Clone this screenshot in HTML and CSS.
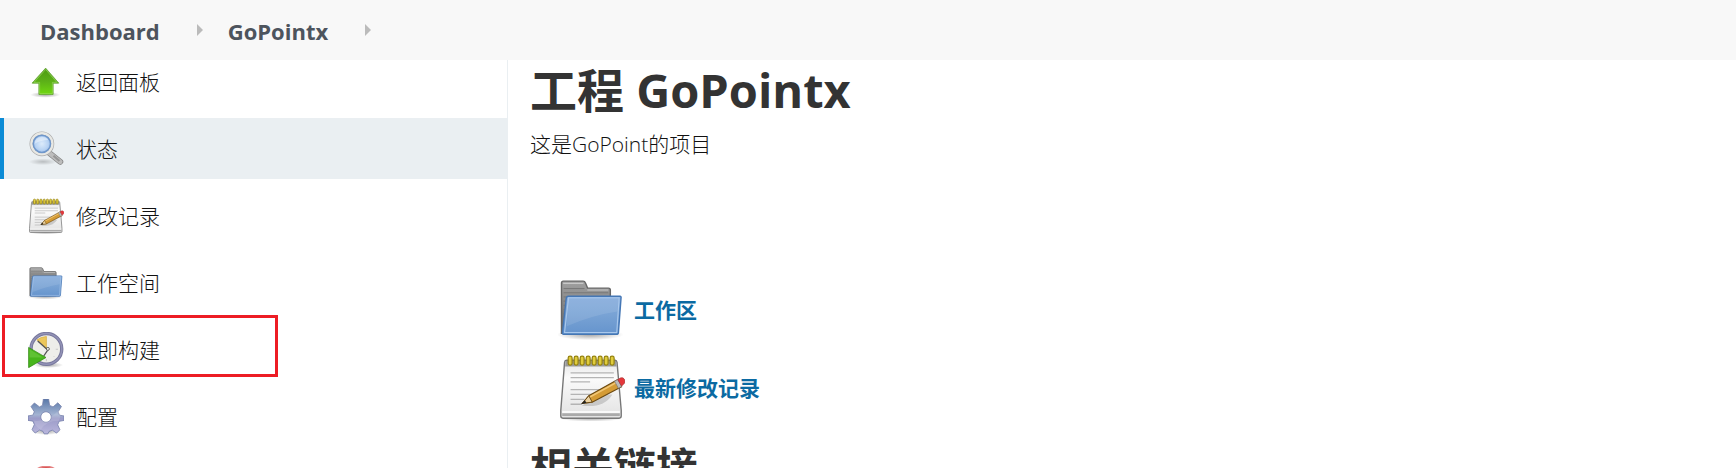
FILE: index.html
```html
<!DOCTYPE html>
<html lang="zh-CN">
<head>
<meta charset="utf-8">
<meta name="viewport" content="width=device-width, initial-scale=1">
<title>GoPointx</title>
<link rel="stylesheet" href="styles.css">
</head>
<body>
<svg class="defs" aria-hidden="true">
  <defs>
    <linearGradient id="green" x1="0" y1="0" x2="0" y2="1"><stop offset="0" stop-color="#4b9a10"/><stop offset=".5" stop-color="#5cb018"/><stop offset="1" stop-color="#70d810"/></linearGradient>
    <linearGradient id="grey" x1="0" y1="0" x2="0" y2="1"><stop offset="0" stop-color="#a0a0a0"/><stop offset="1" stop-color="#666"/></linearGradient>
    <linearGradient id="blue" x1="0" y1="0" x2="0" y2="1"><stop offset="0" stop-color="#84abdc"/><stop offset=".5" stop-color="#78a2d4"/><stop offset="1" stop-color="#6594cd"/></linearGradient>
    <linearGradient id="paper" x1="0" y1="0" x2="0" y2="1"><stop offset="0" stop-color="#e4e4e4"/><stop offset=".3" stop-color="#fbfbfb"/><stop offset="1" stop-color="#e2e2e2"/></linearGradient>
    <linearGradient id="steel" x1="0" y1="0" x2="0" y2="1"><stop offset="0" stop-color="#5878a8"/><stop offset=".45" stop-color="#a3b3d2"/><stop offset=".55" stop-color="#9b9bc8"/><stop offset="1" stop-color="#b9b6dc"/></linearGradient>
    <radialGradient id="glass"><stop offset="0" stop-color="#dcebfb"/><stop offset=".6" stop-color="#b8d3f3"/><stop offset="1" stop-color="#8db3e2"/></radialGradient>
    <radialGradient id="shade"><stop offset="0" stop-color="#000" stop-opacity=".35"/><stop offset="1" stop-color="#000" stop-opacity="0"/></radialGradient>
    <symbol id="folder" viewBox="0 0 48 48">
      <ellipse cx="23" cy="42" rx="24" ry="4" fill="url(#shade)"/>
      <path d="M2.500 41V5q0-1.300 1.300-1.300H18q1.200 0 1.600 1.200l1.600 3.800h15q1.300 0 1.300 1.300v31z" fill="url(#grey)" stroke="#666"/>
      <path d="M3.700 5.300h14.500M21 10h15" stroke="#c8c8c8" stroke-width=".8"/>
      <path d="M4 9h15M4 12h32M4 15h4M4 18h4M4 21h4M4 24h4M4 27h3M4 30h3" stroke="#777" stroke-width=".7"/>
      <path d="M7.500 14.500h37q.8 0 .7.900l-1.900 25q-.1 1.400-1.500 1.400H4q-1 0-.8-1.200L5.900 16q.2-1.500 1.600-1.500z" fill="url(#blue)" stroke="#4577b5"/>
      <path d="M7.500 15.700h36.300l-1.700 24.800H4.700z" fill="none" stroke="#a9c8ec" stroke-width=".8"/>
      <path d="M7.300 16.500h36l-.7 9Q25 28 6.300 36z" fill="#fff" opacity=".1"/>
    </symbol>
    <symbol id="notes" viewBox="0 0 48 48">
      <ellipse cx="23.500" cy="46" rx="23" ry="2.500" fill="url(#shade)"/>
      <path d="M6 4.500h35q1 0 1.300 1.500l3 34.500v4q0 1.500-1.500 1.500H3.500Q2 46 2 44.500v-4L4.700 6Q4.900 4.500 6 4.500z" fill="url(#paper)" stroke="#777"/>
      <path d="M5.400 5h36.300l.3 4H5.100z" fill="#999"/>
      <path d="M3 41.500h41.300" stroke="#fff"/><path d="M3 43.500h41.300" stroke="#aaa" stroke-width="2"/>
      <path d="M9 13.500h31M9 17h31M9 20h14M9 25.500h28M9 29h24M9 32.500h10M9 36h8" stroke="#b4b4b4" stroke-width=".9"/>
      <g fill="#e0cc3c" stroke="#96830f" stroke-width=".9"><rect x="7.300" y="1.500" width="2.800" height="6.500" rx="1.300"/><rect x="11.600" y="1.500" width="2.800" height="6.500" rx="1.300"/><rect x="15.900" y="1.500" width="2.800" height="6.500" rx="1.300"/><rect x="20.200" y="1.500" width="2.800" height="6.500" rx="1.300"/><rect x="24.500" y="1.500" width="2.800" height="6.500" rx="1.300"/><rect x="28.800" y="1.500" width="2.800" height="6.500" rx="1.300"/><rect x="33.100" y="1.500" width="2.800" height="6.500" rx="1.300"/><rect x="37.400" y="1.500" width="2.800" height="6.500" rx="1.300"/></g>
      <path d="M17 37q16 2 22-8l-8 0z" fill="#000" opacity=".15"/>
      <path d="M17.500 35.300l4.600-5.400L42.500 18.500l3 5L24.500 34.500z" fill="#d49b35" stroke="#6c4a12" stroke-width=".8"/>
      <path d="M22.500 31L43 19.800" stroke="#f1c674" stroke-width="1.200"/>
      <path d="M17.500 35.300l4.600-5.400 2.400 4.600z" fill="#ecd2a0" stroke="#6c4a12" stroke-width=".7"/><path d="M16.500 36l2.700-2.900 1.200 1.800z" fill="#222"/>
      <path d="M40.500 19.500l2.300-1.200 2.800 5-2.300 1.300z" fill="#bbb" stroke="#777" stroke-width=".5"/>
      <path d="M42.800 18.300l2.200-1.200q1.700-.5 2.500.9t.1 2.900l-2 2.100z" fill="#e5373b" stroke="#a33" stroke-width=".5"/>
    </symbol>
  </defs>
</svg>

<header class="topbar">
  <nav class="crumbs" aria-label="Breadcrumb">
    <a href="#">Dashboard</a><span class="caret"></span>
    <a href="#">GoPointx</a><span class="caret"></span>
  </nav>
</header>

<div class="page">
  <nav class="side">
    <a class="task" href="#">
      <svg class="icon" viewBox="0 0 48 48"><ellipse cx="23" cy="41" rx="20" ry="4" fill="url(#shade)"/><path d="M23.500 5.500L41 25.500h-7.500V40.500H14.500v-15H5.500z" fill="url(#green)" stroke="#5a9c28"/><path d="M23.500 7.300L38.500 24.500h-6v15H15.500v-15H8z" fill="none" stroke="#a8e070" opacity=".7"/></svg>
      返回面板</a>
    <a class="task active" href="#">
      <svg class="icon" viewBox="0 0 48 48"><ellipse cx="20" cy="41" rx="19" ry="4.500" fill="url(#shade)" opacity=".6"/><path d="M28 29L43 41" stroke="#858585" stroke-width="8" stroke-linecap="round"/><path d="M28 29L43 41" stroke="#bdbdbd" stroke-width="6" stroke-linecap="round"/><path d="M34 33l8 7" stroke="#969696" stroke-width="3"/><circle cx="18.500" cy="17" r="14" fill="url(#glass)" stroke="#aaa" stroke-width="5"/><circle cx="18.500" cy="17" r="14" fill="none" stroke="#e8e8e4" stroke-width="3.200"/><circle cx="18.500" cy="17" r="11.500" fill="none" stroke="#6f97cb" stroke-width="2"/><path d="M9 17q0-9 10-9 6 0 8 4-10 0-18 5z" fill="#fff" opacity=".4"/></svg>
      状态</a>
    <a class="task" href="#"><svg class="icon"><use href="#notes"/></svg>修改记录</a>
    <a class="task" href="#"><svg class="icon"><use href="#folder"/></svg>工作空间</a>
    <a class="task marked" href="#">
      <svg class="icon" viewBox="0 0 48 48"><ellipse cx="27" cy="44" rx="20" ry="4" fill="url(#shade)"/><circle cx="24.500" cy="22.500" r="20.500" fill="#eeeeea" stroke="#77779c" stroke-width="4.500"/><circle cx="24.500" cy="22.500" r="20.500" fill="none" stroke="#9292b6" stroke-width="2"/><path d="M24.500 22L12 10.500q5-4 12.500-4.500z" fill="#ecc75c" stroke="#d8ad3e"/><path d="M13 12l11 10 3 1-6 9" fill="none" stroke="#555" stroke-width="1.800"/><circle cx="26.500" cy="22.500" r="2" fill="#eee" stroke="#444"/><path d="M37 23h3M24.500 36v3M34 32l1 1" stroke="#bbb"/><path d="M.8 20.500L24 34 .8 47.500z" fill="#47b51b" stroke="#348b15"/><path d="M2 23l18 11H2z" fill="#86d558" opacity=".4"/></svg>
      立即构建</a>
    <a class="task" href="#">
      <svg class="icon" viewBox="0 0 48 48"><ellipse cx="24" cy="43" rx="20" ry="5" fill="url(#shade)"/><path fill-rule="evenodd" d="M20.500 0h7l1.300 8.500 4.600 2L39.700 5l4.900 5-4.500 7.200 1.900 4.400 6 1v6l-6.500 1.200-1.900 4.600 3 6.600-4.500 4.500-5.700-4-4.400 1.800L26.500 46.500h-5L20 43.200l-4.400-1.800-6 4-4.200-4.500 3-6.900-1.900-4.500L0 28.500v-6l6.500-1L8.400 17 4 10l4.500-4.700 6.800 5.200 4-2zM24 17a7 7 0 1 0 0 14 7 7 0 1 0 0-14z" fill="url(#steel)" stroke="#717ca8"/><path d="M8 29Q27 31 42 14q3 8-1 15-17 0-24 12-7-3-9-12z" fill="#fff" opacity=".13"/></svg>
      配置</a>
    <a class="task" href="#">
      <svg class="icon" viewBox="0 0 48 48"><circle cx="24" cy="22.500" r="22" fill="#d34848" stroke="#e58080" stroke-width="2"/><path d="M12 20h24v6H12z" fill="#fff"/></svg>
    </a>
  </nav>

  <main class="content">
    <h1>工程 GoPointx</h1>
    <p class="description">这是GoPoint的项目</p>
    <div class="links">
      <a href="#"><svg class="big-icon"><use href="#folder"/></svg>工作区</a>
      <a href="#"><svg class="big-icon"><use href="#notes"/></svg>最新修改记录</a>
    </div>
    <h2>相关链接</h2>
  </main>
</div>
</body>
</html>
```
FILE: styles.css
```css
*, *::before, *::after { box-sizing: border-box; }

body {
  margin: 0;
  height: 100vh;
  display: flex;
  flex-direction: column;
  overflow: hidden;
  background: #fff;
  color: #333;
  font: 21px/30px "Open Sans", "Noto Sans CJK SC", sans-serif;
}

a { color: inherit; text-decoration: none; }

.defs { position: absolute; width: 0; height: 0; }

.topbar {
  position: relative;
  z-index: 1;
  flex: none;
  height: 60px;
  padding: 2px 40px 0;
  background: #f8f8f8;
}

.crumbs {
  display: flex;
  align-items: center;
  height: 100%;
  color: #4d545d;
  font-size: 22px;
  font-weight: 700;
}

.caret {
  margin: 0 25px 2px 37px;
  border-style: solid;
  border-width: 6px 0 6px 6px;
  border-color: transparent transparent transparent #bbb;
}

.page {
  flex: 1;
  display: flex;
  min-height: 0;
  overflow: hidden;
  margin-top: -9px;
}

.side {
  flex: none;
  width: 508px;
  display: flex;
  flex-direction: column;
  gap: 6px;
  border-right: 1px solid #eaeff2;
}

.task {
  position: relative;
  flex: none;
  height: 61px;
  display: flex;
  align-items: center;
  gap: 12px;
  padding-left: 24px;
  border-left: 4px solid transparent;
  color: #111;
  font-weight: 300;
}

.active {
  background: #eaeff2;
  border-left-color: #0b8bd6;
}

.marked::after {
  content: "";
  position: absolute;
  top: -4px;
  left: -2px;
  width: 276px;
  height: 62px;
  border: 3px solid #ed1c24;
}

.icon { flex: none; width: 36px; height: 36px; }

.big-icon { flex: none; width: 67px; height: 67px; }

.content {
  flex: 1;
  min-width: 0;
  padding: 8px 0 0 22px;
}

h1, h2, p { margin: 0; }

h1 { font-size: 47px; line-height: 62px; }

h2 { margin-top: 16px; font-size: 42px; line-height: 60px; }

.description { margin-top: 8px; color: #111; font-weight: 300; }

.links {
  display: flex;
  flex-direction: column;
  align-items: flex-start;
  gap: 11px;
  margin: 117px 0 0 28px;
}

.links a {
  display: flex;
  align-items: center;
  gap: 9px;
  color: #0b6aa2;
  font-weight: 700;
}
```
